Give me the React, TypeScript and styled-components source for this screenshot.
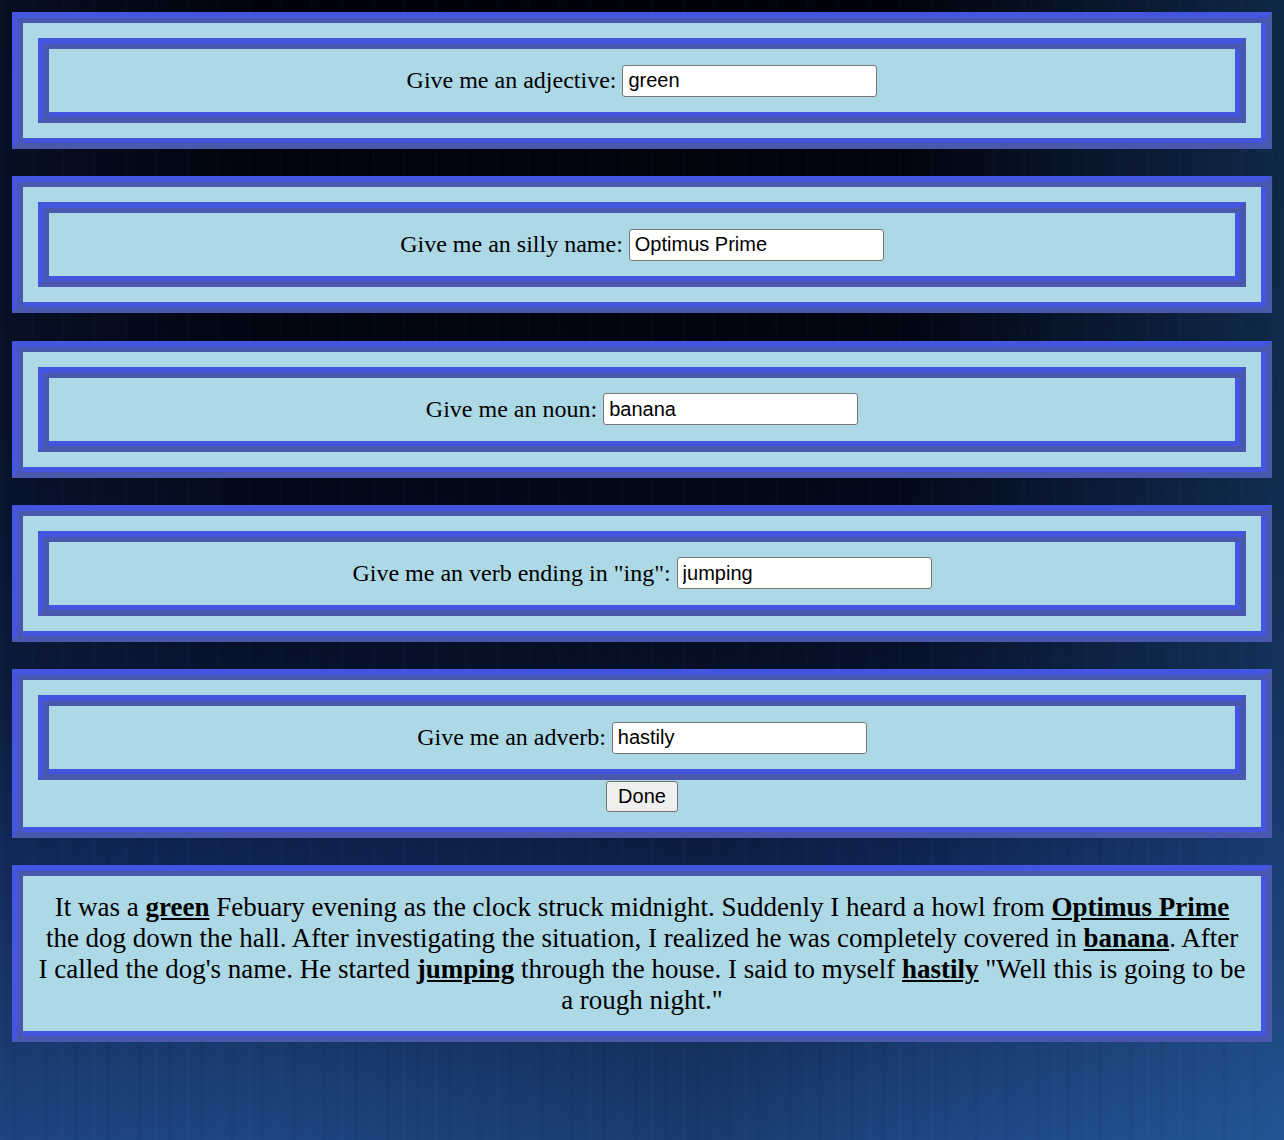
import React from 'react'
import styled, { createGlobalStyle, css } from 'styled-components'

const bright = '#4455df'
const dark = '#4958ac'

const GlobalStyle = createGlobalStyle`
  html {
    min-height: 100%;
    background-color: #02060f;
    background-image:
      repeating-linear-gradient(90deg, rgba(120, 160, 220, 0.02) 0 3px, transparent 3px 13px, rgba(0, 0, 0, 0.04) 13px 17px, transparent 17px 31px),
      linear-gradient(to right, rgba(30, 60, 120, 0.2) 0%, rgba(0, 0, 0, 0) 20%, rgba(0, 0, 0, 0.15) 55%, rgba(0, 0, 0, 0) 70%, rgba(45, 110, 180, 0.35) 100%),
      linear-gradient(to bottom, #00030d 0%, #010410 25%, #030a1c 45%, #081430 62%, #0f2350 75%, #163464 88%, #1d4682 100%);
  }
  body {
    margin: 0;
    font-family: 'Liberation Serif', 'Times New Roman', serif;
    color: #000;
  }
`

const ridge = css`
  border: 6px solid;
  border-color: ${bright} ${dark} ${dark} ${bright};
  box-shadow: inset 5px 5px 0 ${dark}, inset -5px -5px 0 ${bright};
`

const Page = styled.div`
  display: flex;
  flex-direction: column;
  gap: 27.25px;
  padding: 12px;
`

const Panel = styled.div`
  ${ridge};
  background: #add8e6;
  padding: 20px;
  display: flex;
  flex-direction: column;
  align-items: center;
`

const Prompt = styled.div`
  ${ridge};
  align-self: stretch;
  display: flex;
  align-items: center;
  justify-content: center;
  gap: 6px;
  height: 63px;
  padding: 5px;
  font-size: 24px;
`

const Field = styled.input`
  box-sizing: border-box;
  width: 255px;
  height: 32px;
  padding: 1px 5px;
  border: 1px solid #767676;
  border-radius: 3px;
  background: #fff;
  font-family: 'Liberation Sans', Arial, sans-serif;
  font-size: 20px;
  color: #000;
`

const DoneButton = styled.button`
  height: 31px;
  padding: 1px 11px;
  margin-top: 1px;
  border: 1px solid #767676;
  border-radius: 3px;
  background: #efefef;
  font-family: 'Liberation Sans', Arial, sans-serif;
  font-size: 20px;
  color: #000;
`

const Story = styled.p`
  margin: 0;
  padding: 1px 0.3px 0;
  text-align: center;
  font-size: 27px;
  line-height: 31px;
`

const Word = styled.b`
  text-decoration: underline;
`

const prompts = [
  { label: 'Give me an adjective:', value: 'green' },
  { label: 'Give me an silly name:', value: 'Optimus Prime' },
  { label: 'Give me an noun:', value: 'banana' },
  { label: 'Give me an verb ending in "ing":', value: 'jumping' },
]

export default function App() {
  return (
    <>
      <GlobalStyle />
      <Page>
        {prompts.map((p) => (
          <Panel key={p.label}>
            <Prompt>
              {p.label}
              <Field defaultValue={p.value} />
            </Prompt>
          </Panel>
        ))}
        <Panel>
          <Prompt>
            Give me an adverb:
            <Field defaultValue='hastily' />
          </Prompt>
          <DoneButton>Done</DoneButton>
        </Panel>
        <Panel>
          <Story>
            It was a <Word>green</Word> Febuary evening as the clock struck
            midnight. Suddenly I heard a howl from <Word>Optimus Prime</Word>{' '}
            the dog down the hall. After investigating the situation, I realized
            he was completely covered in <Word>banana</Word>. After I called the
            dog's name. He started <Word>jumping</Word> through the house. I said
            to myself <Word>hastily</Word> "Well this is going to be a rough
            night."
          </Story>
        </Panel>
      </Page>
    </>
  )
}
